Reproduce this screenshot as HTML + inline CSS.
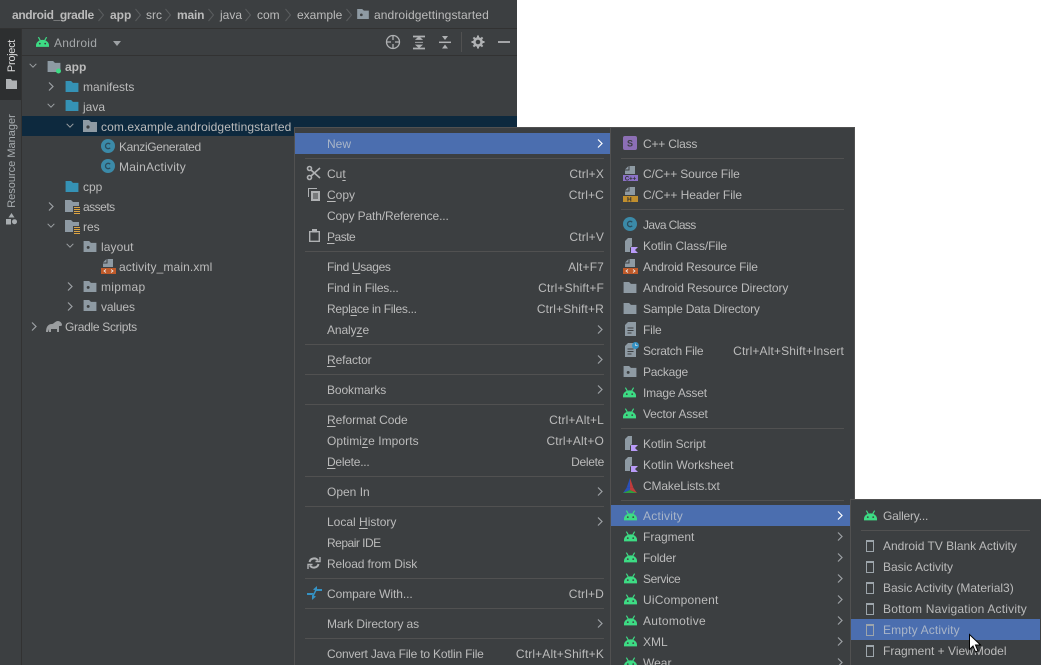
<!DOCTYPE html>
<html><head><meta charset="utf-8">
<style>
html,body{margin:0;padding:0;width:1041px;height:665px;overflow:hidden;background:#fff}
body{position:relative;font-family:"Liberation Sans",sans-serif;font-size:12px;color:#bbb}
.b{position:absolute}
.t{position:absolute;white-space:nowrap;line-height:20px;height:20px}
.s{position:absolute;white-space:nowrap;line-height:20px;height:20px;text-align:right;letter-spacing:.15px}
.h{color:#a9b5c8}
b{font-weight:bold}
u{text-underline-offset:2px}
svg{position:absolute;overflow:visible}
.sep{position:absolute;height:1px;background:#515151}
</style></head><body>
<svg width="0" height="0" style="position:absolute">
<defs>
<symbol id="and" viewBox="0 0 12 9"><path d="M0 9V7.500C0 5 2.500 2.500 6 2.500S12 5 12 7.500V9z" fill="#3ddc84"/><path d="M2.200 0l1.800 3.200M9.800 0L8 3.200" stroke="#3ddc84" stroke-width="1.100" fill="none"/><circle cx="3.500" cy="6" r=".8" fill="#3c3f41"/><circle cx="8.500" cy="6" r=".8" fill="#3c3f41"/></symbol>
<symbol id="fb" viewBox="0 0 14 12"><path d="M0 0h6l2 2h6v10H0z" fill="#3592b5"/></symbol>
<symbol id="fg" viewBox="0 0 14 12"><path d="M0 0h6l2 2h6v10H0z" fill="#8e9aa3"/></symbol>
<symbol id="pk" viewBox="0 0 14 12"><path d="M0 0h6l2 2h6v10H0z" fill="#8e9aa3"/><circle cx="5" cy="7" r="1.600" fill="#3c3f41"/></symbol>
<symbol id="res" viewBox="0 0 15 14"><path d="M0 0h6l2 2h6v4H8v6H0z" fill="#8e9aa3"/><path d="M9 7.500h6M9 9.500h6M9 11.500h6M9 13.500h6" stroke="#d9a343" stroke-width="1"/></symbol>
<symbol id="cl" viewBox="0 0 14 14"><circle cx="7" cy="7" r="7" fill="#3b8aa8"/><path d="M9.200 5.200A2.700 2.700 0 1 0 9.200 8.800" stroke="#2b4c5c" stroke-width="1.300" fill="none"/></symbol>
<symbol id="ar" viewBox="0 0 6 9"><path d="M1 .5l4 4-4 4" stroke="currentColor" stroke-width="1.200" fill="none"/></symbol>
<symbol id="dn" viewBox="0 0 9 6"><path d="M.5 1l4 4 4-4" stroke="#9da1a4" stroke-width="1.200" fill="none"/></symbol>
<symbol id="fl" viewBox="0 0 15 9"><path d="M6.500 0H12v8H2V4.500h4.500z" fill="#8e9aa3"/><path d="M5.500 0v3.500H2z" fill="#8e9aa3"/></symbol>
<symbol id="act" viewBox="0 0 8 12"><rect x=".5" y=".5" width="7" height="11" fill="none" stroke="#9da5ab"/><rect x="0" y="0" width="8" height="2" fill="#9da5ab"/></symbol>
<symbol id="kt" viewBox="0 0 14 15"><path d="M1 3l3-3h4v8l-2 2v4H1z" fill="#8e9aa3"/><path d="M7 9h7l-3 3 3 3H7z" fill="#b99bf8"/></symbol>
</defs>
</svg>

<!-- IDE panel -->
<div class="b" style="left:0;top:0;width:517px;height:665px;background:#3c3f41"></div>
<div class="b" style="left:0;top:28px;width:517px;height:1px;background:#323232"></div>
<div class="b" style="left:21px;top:55px;width:496px;height:1px;background:#323232"></div>
<div class="b" style="left:21px;top:29px;width:1px;height:636px;background:#323232"></div>
<div class="b" style="left:0;top:29px;width:21px;height:71px;background:#2d2f30"></div>
<div class="b" style="left:22px;top:116px;width:495px;height:20px;background:#0d293e"></div>

<!-- breadcrumbs -->
<div class="t" style="left:12px;top:5px;letter-spacing:-.35px"><b>android_gradle</b></div>
<div class="t" style="left:110px;top:5px"><b>app</b></div>
<div class="t" style="left:146px;top:5px">src</div>
<div class="t" style="left:177px;top:5px;letter-spacing:-.2px"><b>main</b></div>
<div class="t" style="left:220px;top:5px">java</div>
<div class="t" style="left:257px;top:5px">com</div>
<div class="t" style="left:297px;top:5px">example</div>
<div class="t" style="left:374px;top:5px;letter-spacing:.1px">androidgettingstarted</div>
<svg style="left:0;top:0" width="517" height="28"><g stroke="#5a5d5f" fill="none"><path d="M98.500 9l5 6-5 6M135.500 9l5 6-5 6M165.500 9l5 6-5 6M208.500 9l5 6-5 6M245.500 9l5 6-5 6M285.500 9l5 6-5 6M346.500 9l5 6-5 6"/></g></svg>
<svg style="left:356px;top:9px" width="14" height="10"><use href="#pk" width="14" height="10"/></svg>

<!-- left stripe -->
<div class="t" style="left:12px;top:56px;transform:translate(-50%,-50%) rotate(-90deg);color:#ddd;width:40px;text-align:center;font-size:11px;letter-spacing:-.3px">Project</div>
<svg style="left:6px;top:79px" width="11" height="10"><path d="M0 0h5l1 1.500h5V10H0z" fill="#aeb1b3"/></svg>
<div class="t" style="left:12px;top:161px;transform:translate(-50%,-50%) rotate(-90deg);color:#a8adb0;width:100px;text-align:center;font-size:11px">Resource Manager</div>
<svg style="left:6px;top:213px" width="11" height="12"><path d="M5.500 0l3 4.500h-6z M0 6h5v5.500H0z" fill="#a8adb0"/><circle cx="8.500" cy="8.700" r="2.500" fill="#a8adb0"/></svg>

<!-- toolbar -->
<svg style="left:36px;top:37px" width="13" height="10"><use href="#and" width="13" height="10"/></svg>
<div class="t" style="left:54px;top:33px;color:#a4a7a9;letter-spacing:.25px">Android</div>
<svg style="left:113px;top:41px" width="8" height="5"><path d="M0 0h8L4 5z" fill="#9da1a4"/></svg>
<svg style="left:385px;top:34px" width="130" height="18" fill="none" stroke="#afb1b3" stroke-width="1.300">
<circle cx="8" cy="8" r="6.500"/><path d="M8 2v4M8 10v4M2 8h4M10 8h4" />
<path d="M28 2.500h12M28 14.500h12" stroke-width="1.800"/><path d="M31 5.500h6L34 2.800zM31 11h6l-3 2.700zM30 8.300h8" fill="#afb1b3" stroke-width=".8"/>
<path d="M54 8.300h12" stroke-width="1.500"/><path d="M57 2h6l-3 4zM57 14.500h6l-3-4z" fill="#afb1b3" stroke="none"/>
<path d="M76.500 -2v20" stroke="#515151" stroke-width="1"/>
<circle cx="93" cy="8" r="3.600" stroke-width="2.600"/><path d="M93 1.500v2.500M93 12v2.500M86.500 8H89M97 8h2.500M88.400 3.400l1.700 1.700M95.900 10.900l1.700 1.700M88.400 12.600l1.700-1.700M95.900 5.100l1.700-1.700" stroke-width="2"/>
<path d="M113 8h12" stroke-width="1.800"/></svg>

<!-- tree -->
<svg style="left:29px;top:63px" width="9" height="6"><use href="#dn" width="8" height="5"/></svg>
<svg style="left:47px;top:61px" width="15" height="13"><use href="#fg" width="14" height="11"/><circle cx="11.500" cy="10" r="2.500" fill="#3ddc84"/></svg>
<div class="t" style="left:65px;top:57px"><b>app</b></div>
<svg style="left:48px;top:82px;color:#9da1a4" width="6" height="9"><use href="#ar" width="6" height="9"/></svg>
<svg style="left:65px;top:81px" width="14" height="11"><use href="#fb" width="14" height="11"/></svg>
<div class="t" style="left:83px;top:77px">manifests</div>
<svg style="left:47px;top:103px" width="9" height="6"><use href="#dn" width="8" height="5"/></svg>
<svg style="left:65px;top:100px" width="14" height="11"><use href="#fb" width="14" height="11"/></svg>
<div class="t" style="left:83px;top:97px">java</div>
<svg style="left:66px;top:123px" width="9" height="6"><use href="#dn" width="8" height="5"/></svg>
<svg style="left:83px;top:120px" width="14" height="12"><use href="#pk" width="14" height="12"/></svg>
<div class="t" style="left:101px;top:117px;letter-spacing:.09px">com.example.androidgettingstarted</div>
<svg style="left:101px;top:139px" width="14" height="14"><use href="#cl" width="14" height="14"/></svg>
<div class="t" style="left:119px;top:137px;letter-spacing:-.35px">KanziGenerated</div>
<svg style="left:101px;top:159px" width="14" height="14"><use href="#cl" width="14" height="14"/></svg>
<div class="t" style="left:119px;top:157px;letter-spacing:.25px">MainActivity</div>
<svg style="left:65px;top:181px" width="14" height="11"><use href="#fb" width="14" height="11"/></svg>
<div class="t" style="left:83px;top:177px">cpp</div>
<svg style="left:48px;top:202px;color:#9da1a4" width="6" height="9"><use href="#ar" width="6" height="9"/></svg>
<svg style="left:65px;top:200px" width="15" height="14"><use href="#res" width="15" height="14"/></svg>
<div class="t" style="left:83px;top:197px;letter-spacing:-.5px">assets</div>
<svg style="left:47px;top:223px" width="9" height="6"><use href="#dn" width="8" height="5"/></svg>
<svg style="left:65px;top:220px" width="15" height="14"><use href="#res" width="15" height="14"/></svg>
<div class="t" style="left:83px;top:217px">res</div>
<svg style="left:66px;top:243px" width="9" height="6"><use href="#dn" width="8" height="5"/></svg>
<svg style="left:83px;top:241px" width="14" height="11"><use href="#pk" width="14" height="11"/></svg>
<div class="t" style="left:101px;top:237px;letter-spacing:.1px">layout</div>
<svg style="left:101px;top:259px" width="15" height="15"><use href="#fl" width="15" height="9"/><rect y="9" width="15" height="6" fill="#bf5a2a"/><path d="M5 10.500l-2 1.500 2 1.500M10 10.500l2 1.500-2 1.500" stroke="#eee" fill="none" stroke-width=".8"/></svg>
<div class="t" style="left:119px;top:257px;letter-spacing:.12px">activity_main.xml</div>
<svg style="left:67px;top:282px;color:#9da1a4" width="6" height="9"><use href="#ar" width="6" height="9"/></svg>
<svg style="left:83px;top:281px" width="14" height="11"><use href="#pk" width="14" height="11"/></svg>
<div class="t" style="left:101px;top:277px;letter-spacing:.3px">mipmap</div>
<svg style="left:67px;top:302px;color:#9da1a4" width="6" height="9"><use href="#ar" width="6" height="9"/></svg>
<svg style="left:83px;top:300px" width="14" height="11"><use href="#pk" width="14" height="11"/></svg>
<div class="t" style="left:101px;top:297px;letter-spacing:-.15px">values</div>
<svg style="left:31px;top:322px;color:#9da1a4" width="6" height="9"><use href="#ar" width="6" height="9"/></svg>
<svg style="left:46px;top:320px" width="16" height="12"><path d="M0 12c0-5 2-8 6-8 2 0 3-3 6-3 2 0 4 2 4 4 0 1-2 1-3 1v6h-2V9H5v3H3V9l-1 3z" fill="#9a9d9f"/></svg>
<div class="t" style="left:65px;top:317px;letter-spacing:-.3px">Gradle Scripts</div>

<!-- menu 1 -->
<div class="b" style="left:294px;top:127px;width:317px;height:538px;background:#3c3f41;border-top:1px solid #515151;border-left:1px solid #515151;box-sizing:border-box"></div>
<div class="b" style="left:295px;top:133px;width:315px;height:21px;background:#4b6eaf"></div>
<div class="b" style="left:610px;top:127px;width:245px;height:538px;background:#3c3f41;border-top:1px solid #515151;border-left:1px solid #515151;border-right:1px solid #515151;box-sizing:border-box"></div>
<div class="b" style="left:611px;top:505px;width:239px;height:21px;background:#4b6eaf"></div>
<div class="b" style="left:850px;top:499px;width:191px;height:166px;background:#3c3f41;border-top:1px solid #515151;border-left:1px solid #515151;box-sizing:border-box"></div>
<div class="b" style="left:851px;top:619px;width:189px;height:21px;background:#4b6eaf"></div>

<div class="sep" style="left:305px;top:158px;width:299px"></div>
<div class="sep" style="left:305px;top:251px;width:299px"></div>
<div class="sep" style="left:305px;top:344px;width:299px"></div>
<div class="sep" style="left:305px;top:374px;width:299px"></div>
<div class="sep" style="left:305px;top:404px;width:299px"></div>
<div class="sep" style="left:305px;top:476px;width:299px"></div>
<div class="sep" style="left:305px;top:506px;width:299px"></div>
<div class="sep" style="left:305px;top:578px;width:299px"></div>
<div class="sep" style="left:305px;top:608px;width:299px"></div>
<div class="sep" style="left:305px;top:638px;width:299px"></div>

<div class="t h" style="left:327px;top:134px">New</div>
<div class="t" style="left:327px;top:164px">Cu<u>t</u></div>
<div class="t" style="left:327px;top:185px"><u>C</u>opy</div>
<div class="t" style="left:327px;top:206px;letter-spacing:-.14px">Copy Path/Reference...</div>
<div class="t" style="left:327px;top:227px;letter-spacing:-.5px"><u>P</u>aste</div>
<div class="t" style="left:327px;top:257px;letter-spacing:-.35px">Find <u>U</u>sages</div>
<div class="t" style="left:327px;top:278px;letter-spacing:-.2px">Find in Files...</div>
<div class="t" style="left:327px;top:299px;letter-spacing:-.3px">Repl<u>a</u>ce in Files...</div>
<div class="t" style="left:327px;top:320px;letter-spacing:-.1px">Analy<u>z</u>e</div>
<div class="t" style="left:327px;top:350px;letter-spacing:-.1px"><u>R</u>efactor</div>
<div class="t" style="left:327px;top:380px;letter-spacing:-.1px">Bookmarks</div>
<div class="t" style="left:327px;top:410px;letter-spacing:-.06px"><u>R</u>eformat Code</div>
<div class="t" style="left:327px;top:431px;letter-spacing:.06px">Optimi<u>z</u>e Imports</div>
<div class="t" style="left:327px;top:452px;letter-spacing:-.25px"><u>D</u>elete...</div>
<div class="t" style="left:327px;top:482px">Open In</div>
<div class="t" style="left:327px;top:512px">Local <u>H</u>istory</div>
<div class="t" style="left:327px;top:533px;letter-spacing:-.5px">Repair IDE</div>
<div class="t" style="left:327px;top:554px;letter-spacing:-.12px">Reload from Disk</div>
<div class="t" style="left:327px;top:584px;letter-spacing:-.07px">Compare With...</div>
<div class="t" style="left:327px;top:614px;letter-spacing:-.12px">Mark Directory as</div>
<div class="t" style="left:327px;top:644px;letter-spacing:-.19px">Convert Java File to Kotlin File</div>

<div class="s" style="left:454px;width:150px;top:164px">Ctrl+X</div>
<div class="s" style="left:454px;width:150px;top:185px">Ctrl+C</div>
<div class="s" style="left:454px;width:150px;top:227px">Ctrl+V</div>
<div class="s" style="left:454px;width:150px;top:257px">Alt+F7</div>
<div class="s" style="left:454px;width:150px;top:278px">Ctrl+Shift+F</div>
<div class="s" style="left:454px;width:150px;top:299px">Ctrl+Shift+R</div>
<div class="s" style="left:454px;width:150px;top:410px">Ctrl+Alt+L</div>
<div class="s" style="left:454px;width:150px;top:431px">Ctrl+Alt+O</div>
<div class="s" style="left:454px;width:150px;top:452px;letter-spacing:-.3px">Delete</div>
<div class="s" style="left:454px;width:150px;top:584px">Ctrl+D</div>
<div class="s" style="left:454px;width:150px;top:644px">Ctrl+Alt+Shift+K</div>

<svg style="left:597px;top:139px;color:#fff" width="6" height="9"><use href="#ar" width="6" height="9"/></svg>
<svg style="left:597px;top:325px;color:#9da1a4" width="6" height="9"><use href="#ar" width="6" height="9"/></svg>
<svg style="left:597px;top:355px;color:#9da1a4" width="6" height="9"><use href="#ar" width="6" height="9"/></svg>
<svg style="left:597px;top:385px;color:#9da1a4" width="6" height="9"><use href="#ar" width="6" height="9"/></svg>
<svg style="left:597px;top:487px;color:#9da1a4" width="6" height="9"><use href="#ar" width="6" height="9"/></svg>
<svg style="left:597px;top:517px;color:#9da1a4" width="6" height="9"><use href="#ar" width="6" height="9"/></svg>
<svg style="left:597px;top:619px;color:#9da1a4" width="6" height="9"><use href="#ar" width="6" height="9"/></svg>

<!-- menu 1 icons -->
<svg style="left:307px;top:166px" width="14" height="14" fill="none" stroke="#afb1b3" stroke-width="1.600"><circle cx="2.500" cy="2.500" r="2"/><circle cx="2.500" cy="11.500" r="2"/><path d="M4 4l9 8M4 10l9-8"/></svg>
<svg style="left:308px;top:188px" width="13" height="13"><path d="M0 0h9v1H1v8H0z" fill="#afb1b3"/><path d="M3 3h9v10H3z" fill="#afb1b3"/><path d="M5 6h5M5 8h5M5 10h5" stroke="#3c3f41"/></svg>
<svg style="left:309px;top:229px" width="11" height="13"><path d="M.7 2.700h9.600v9.600H.7z" fill="none" stroke="#afb1b3" stroke-width="1.400"/><path d="M3 0h5v3.500H3z" fill="#afb1b3"/></svg>
<svg style="left:308px;top:557px" width="12" height="12" fill="none" stroke="#afb1b3" stroke-width="2"><path d="M1.500 5A4.700 4.700 0 0 1 10 3.500M10.500 7A4.700 4.700 0 0 1 2 8.500"/><path d="M7.500 4.500H12V0M4.500 7.500H0V12" stroke-width="1.400"/></svg>
<svg style="left:307px;top:586px" width="15" height="14" fill="#3592c4"><path d="M15 3H9.500l-1 2H15zM10 0L6 3.500 10 5z"/><path d="M0 9h5.500l1-2H0zM5 14l4-3.500L5 9z"/><path d="M9 4l-3 6" stroke="#3592c4" stroke-width="1.500"/></svg>

<!-- menu 2 text -->
<div class="sep" style="left:621px;top:158px;width:223px"></div>
<div class="sep" style="left:621px;top:209px;width:223px"></div>
<div class="sep" style="left:621px;top:428px;width:223px"></div>
<div class="sep" style="left:621px;top:500px;width:223px"></div>

<div class="t" style="left:643px;top:134px;letter-spacing:-.2px">C++ Class</div>
<div class="t" style="left:643px;top:164px;letter-spacing:-.12px">C/C++ Source File</div>
<div class="t" style="left:643px;top:185px;letter-spacing:-.06px">C/C++ Header File</div>
<div class="t" style="left:643px;top:215px;letter-spacing:-.6px">Java Class</div>
<div class="t" style="left:643px;top:236px;letter-spacing:-.12px">Kotlin Class/File</div>
<div class="t" style="left:643px;top:257px;letter-spacing:-.19px">Android Resource File</div>
<div class="t" style="left:643px;top:278px;letter-spacing:-.08px">Android Resource Directory</div>
<div class="t" style="left:643px;top:299px;letter-spacing:-.19px">Sample Data Directory</div>
<div class="t" style="left:643px;top:320px;letter-spacing:-.2px">File</div>
<div class="t" style="left:643px;top:341px;letter-spacing:-.25px">Scratch File</div>
<div class="s" style="left:694px;width:150px;top:341px">Ctrl+Alt+Shift+Insert</div>
<div class="t" style="left:643px;top:362px;letter-spacing:-.25px">Package</div>
<div class="t" style="left:643px;top:383px;letter-spacing:-.2px">Image Asset</div>
<div class="t" style="left:643px;top:404px;letter-spacing:-.17px">Vector Asset</div>
<div class="t" style="left:643px;top:434px;letter-spacing:-.1px">Kotlin Script</div>
<div class="t" style="left:643px;top:455px">Kotlin Worksheet</div>
<div class="t" style="left:643px;top:476px;letter-spacing:-.14px">CMakeLists.txt</div>
<div class="t h" style="left:643px;top:506px;letter-spacing:.25px">Activity</div>
<div class="t" style="left:643px;top:527px">Fragment</div>
<div class="t" style="left:643px;top:548px;letter-spacing:-.15px">Folder</div>
<div class="t" style="left:643px;top:569px;letter-spacing:-.4px">Service</div>
<div class="t" style="left:643px;top:590px;letter-spacing:.2px">UiComponent</div>
<div class="t" style="left:643px;top:611px;letter-spacing:.3px">Automotive</div>
<div class="t" style="left:643px;top:632px">XML</div>
<div class="t" style="left:643px;top:653px">Wear</div>

<svg style="left:837px;top:511px;color:#fff" width="6" height="9"><use href="#ar" width="6" height="9"/></svg>
<svg style="left:837px;top:532px;color:#9da1a4" width="6" height="9"><use href="#ar" width="6" height="9"/></svg>
<svg style="left:837px;top:553px;color:#9da1a4" width="6" height="9"><use href="#ar" width="6" height="9"/></svg>
<svg style="left:837px;top:574px;color:#9da1a4" width="6" height="9"><use href="#ar" width="6" height="9"/></svg>
<svg style="left:837px;top:595px;color:#9da1a4" width="6" height="9"><use href="#ar" width="6" height="9"/></svg>
<svg style="left:837px;top:616px;color:#9da1a4" width="6" height="9"><use href="#ar" width="6" height="9"/></svg>
<svg style="left:837px;top:637px;color:#9da1a4" width="6" height="9"><use href="#ar" width="6" height="9"/></svg>
<svg style="left:837px;top:658px;color:#9da1a4" width="6" height="9"><use href="#ar" width="6" height="9"/></svg>

<!-- menu 2 icons -->
<svg style="left:623px;top:136px" width="14" height="14"><rect width="14" height="14" rx="2" fill="#8c6fb5"/><text x="7" y="10.500" font-size="9" font-weight="bold" text-anchor="middle" fill="#3c3f41">S</text></svg>
<svg style="left:623px;top:166px" width="15" height="15"><use href="#fl" width="15" height="9"/><rect y="9" width="15" height="6" fill="#8c72c8"/><text x="7.500" y="14.500" font-size="6" font-weight="bold" text-anchor="middle" fill="#2f3133">C++</text></svg>
<svg style="left:623px;top:187px" width="15" height="15"><use href="#fl" width="15" height="9"/><rect y="9" width="15" height="6" fill="#c18f2e"/><text x="4" y="14.500" font-size="6.500" font-weight="bold" fill="#2f3133">H</text></svg>
<svg style="left:623px;top:217px" width="14" height="14"><use href="#cl" width="14" height="14"/></svg>
<svg style="left:624px;top:238px" width="14" height="15"><use href="#kt" width="14" height="15"/></svg>
<svg style="left:623px;top:259px" width="15" height="15"><use href="#fl" width="15" height="9"/><rect y="9" width="15" height="6" fill="#bf5a2a"/><path d="M5 10.500l-2 1.500 2 1.500M10 10.500l2 1.500-2 1.500" stroke="#eee" fill="none" stroke-width=".8"/></svg>
<svg style="left:623px;top:282px" width="14" height="11"><use href="#fg" width="14" height="11"/></svg>
<svg style="left:623px;top:303px" width="14" height="11"><use href="#fg" width="14" height="11"/></svg>
<svg style="left:625px;top:322px" width="11" height="14"><path d="M0 3l3-3h8v14H0z" fill="#8e9aa3"/><path d="M2.500 6h6M2.500 8.500h6M2.500 11h4" stroke="#3c3f41"/></svg>
<svg style="left:624px;top:342px" width="15" height="15"><path d="M1 4l3-3h8v14H1z" fill="#8e9aa3"/><path d="M3.500 7h6M3.500 9.500h6M3.500 12h4" stroke="#3c3f41"/><circle cx="11.500" cy="3.500" r="3.500" fill="#3592c4"/><path d="M11.500 1.500v2h2" stroke="#ddd" fill="none" stroke-width=".7"/></svg>
<svg style="left:623px;top:366px" width="14" height="11"><use href="#pk" width="14" height="11"/></svg>
<svg style="left:623px;top:387px" width="13" height="11"><use href="#and" width="13" height="11"/></svg>
<svg style="left:623px;top:408px" width="13" height="11"><use href="#and" width="13" height="11"/></svg>
<svg style="left:624px;top:436px" width="14" height="15"><use href="#kt" width="14" height="15"/></svg>
<svg style="left:624px;top:457px" width="14" height="15"><use href="#kt" width="14" height="15"/></svg>
<svg style="left:623px;top:478px" width="14" height="15"><path d="M7 0l3.500 10L7 9z" fill="#c13c3c"/><path d="M7 0L3.500 10 7 9z" fill="#2a4fb8"/><path d="M0 15L3.500 10 7 9v3z" fill="#2a4fb8"/><path d="M14 15H0l7-3z" fill="#2f9e3f"/><path d="M14 15L10.500 10 7 9v3z" fill="#c13c3c"/></svg>
<svg style="left:624px;top:510px" width="13" height="11"><use href="#and" width="13" height="11"/></svg>
<svg style="left:624px;top:531px" width="13" height="11"><use href="#and" width="13" height="11"/></svg>
<svg style="left:624px;top:552px" width="13" height="11"><use href="#and" width="13" height="11"/></svg>
<svg style="left:624px;top:573px" width="13" height="11"><use href="#and" width="13" height="11"/></svg>
<svg style="left:624px;top:594px" width="13" height="11"><use href="#and" width="13" height="11"/></svg>
<svg style="left:624px;top:615px" width="13" height="11"><use href="#and" width="13" height="11"/></svg>
<svg style="left:624px;top:636px" width="13" height="11"><use href="#and" width="13" height="11"/></svg>
<svg style="left:624px;top:657px" width="13" height="11"><use href="#and" width="13" height="11"/></svg>

<!-- menu 3 -->
<div class="sep" style="left:861px;top:530px;width:169px"></div>
<svg style="left:864px;top:510px" width="13" height="11"><use href="#and" width="13" height="11"/></svg>
<div class="t" style="left:883px;top:506px;letter-spacing:-.2px">Gallery...</div>
<div class="t" style="left:883px;top:536px">Android TV Blank Activity</div>
<div class="t" style="left:883px;top:557px">Basic Activity</div>
<div class="t" style="left:883px;top:578px">Basic Activity (Material3)</div>
<div class="t" style="left:883px;top:599px;letter-spacing:.2px">Bottom Navigation Activity</div>
<div class="t h" style="left:883px;top:620px;letter-spacing:.15px">Empty Activity</div>
<div class="t" style="left:883px;top:641px">Fragment + ViewModel</div>
<svg style="left:866px;top:540px" width="8" height="12"><use href="#act" width="8" height="12"/></svg>
<svg style="left:866px;top:561px" width="8" height="12"><use href="#act" width="8" height="12"/></svg>
<svg style="left:866px;top:582px" width="8" height="12"><use href="#act" width="8" height="12"/></svg>
<svg style="left:866px;top:603px" width="8" height="12"><use href="#act" width="8" height="12"/></svg>
<svg style="left:866px;top:624px" width="8" height="12"><use href="#act" width="8" height="12"/></svg>
<svg style="left:866px;top:645px" width="8" height="12"><use href="#act" width="8" height="12"/></svg>

<!-- cursor -->
<svg style="left:969px;top:634px" width="14" height="20"><path d="M.5.500v15l3.500-3.500 2.500 6 2.500-1-2.500-6h5z" fill="#fff" stroke="#000" stroke-width="1"/></svg>
</body></html>
